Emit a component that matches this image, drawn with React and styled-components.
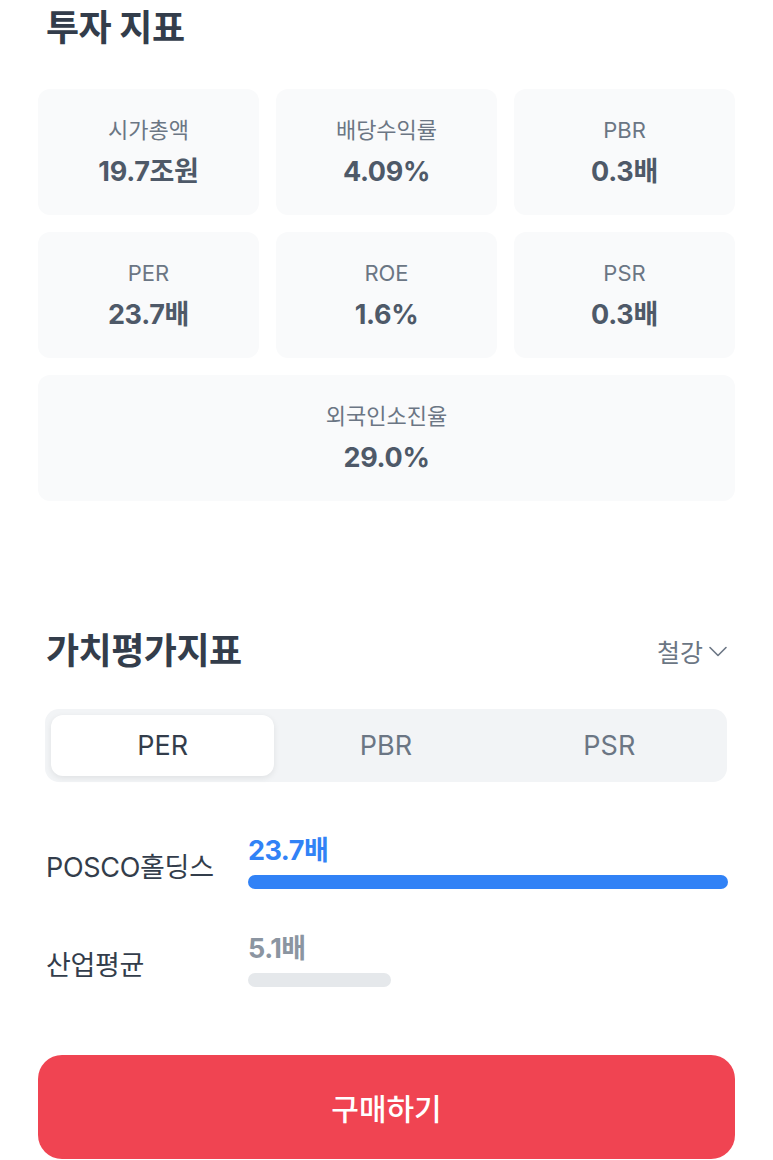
import styled, { createGlobalStyle } from "styled-components"

const GlobalStyle = createGlobalStyle`
  body {
    margin: 0;
    background: #fff;
    font-family: Inter, "Noto Sans CJK KR", sans-serif;
  }
`

const metrics = [
  { label: "시가총액", value: "19.7조원" },
  { label: "배당수익률", value: "4.09%" },
  { label: "PBR", value: "0.3배" },
  { label: "PER", value: "23.7배" },
  { label: "ROE", value: "1.6%" },
  { label: "PSR", value: "0.3배" },
  { label: "외국인소진율", value: "29.0%", wide: true },
]

const tabs = ["PER", "PBR", "PSR"]

const bars = [
  { name: "POSCO홀딩스", value: "23.7배", ratio: 1, main: true },
  { name: "산업평균", value: "5.1배", ratio: 143 / 480 },
]

const App = () => {
  return (
    <Page>
      <GlobalStyle />
      <Title>투자 지표</Title>
      <Grid>
        {metrics.map((m) => (
          <Card key={m.label} $wide={m.wide}>
            <Label>{m.label}</Label>
            <Value>{m.value}</Value>
          </Card>
        ))}
      </Grid>

      <Header>
        <Title>가치평가지표</Title>
        <Filter>
          철강
          <svg width="22" height="22" viewBox="0 0 22 22" fill="none">
            <path d="M3 7.5l8 8 8-8" stroke="#6b7684" strokeWidth="1.6" strokeLinecap="round" strokeLinejoin="round" />
          </svg>
        </Filter>
      </Header>

      <Segment>
        {tabs.map((t, i) => (
          <Tab key={t} $active={i === 0}>{t}</Tab>
        ))}
      </Segment>

      <Bars>
        {bars.map((b) => (
          <BarRow key={b.name}>
            <BarName>{b.name}</BarName>
            <BarBody>
              <BarValue $main={b.main}>{b.value}</BarValue>
              <Track>
                <Fill $main={b.main} style={{ width: `${b.ratio * 100}%` }} />
              </Track>
            </BarBody>
          </BarRow>
        ))}
      </Bars>

      <BuyButton>구매하기</BuyButton>
    </Page>
  )
}

export default App

const Page = styled.div`
  padding: 0 38px;
  height: 1160px;
  overflow: hidden;
  box-sizing: border-box;
`

const Title = styled.h2`
  margin: 0;
  padding-left: 8px;
  font-size: 36px;
  font-weight: 700;
  color: #333d4b;
  line-height: 56px;
  letter-spacing: -0.5px;
`

const Grid = styled.div`
  display: grid;
  grid-template-columns: repeat(3, 1fr);
  gap: 17px;
  margin-top: 33px;
`

const Card = styled.div`
  grid-column: ${({ $wide }) => ($wide ? "1 / -1" : "auto")};
  height: 126px;
  background: #f9fafb;
  border-radius: 12px;
  display: flex;
  flex-direction: column;
  align-items: center;
  justify-content: center;
  gap: 12px;
`

const Label = styled.span`
  font-size: 22px;
  color: #6b7684;
  line-height: 28px;
`

const Value = styled.span`
  font-size: 27px;
  font-weight: 700;
  color: #4e5968;
  line-height: 32px;
  letter-spacing: -0.3px;
`

const Header = styled.div`
  display: flex;
  align-items: center;
  justify-content: space-between;
  margin-top: 122px;
`

const Filter = styled.div`
  display: flex;
  align-items: center;
  gap: 4px;
  font-size: 25px;
  color: #6b7684;
  padding-right: 6px;
`

const Segment = styled.div`
  display: grid;
  grid-template-columns: repeat(3, 1fr);
  margin: 30px 8px 0 7px;
  padding: 6px;
  background: #f2f4f6;
  border-radius: 14px;
  height: 73px;
  box-sizing: border-box;
`

const Tab = styled.div`
  display: flex;
  align-items: center;
  justify-content: center;
  font-size: 27px;
  border-radius: 12px;
  color: ${({ $active }) => ($active ? "#333d4b" : "#6b7684")};
  background: ${({ $active }) => ($active ? "#fff" : "transparent")};
  box-shadow: ${({ $active }) => ($active ? "0 2px 6px rgba(0,0,0,0.08)" : "none")};
`

const Bars = styled.div`
  display: flex;
  flex-direction: column;
  gap: 44px;
  margin-top: 53px;
  padding: 0 7px 0 8px;
`

const BarRow = styled.div`
  display: flex;
  align-items: center;
`

const BarName = styled.span`
  width: 202px;
  flex-shrink: 0;
  font-size: 27px;
  color: #333d4b;
  padding-top: 6px;
  white-space: nowrap;
  letter-spacing: -0.3px;
`

const BarBody = styled.div`
  flex: 1;
  display: flex;
  flex-direction: column;
  gap: 8px;
`

const BarValue = styled.span`
  font-size: 27px;
  font-weight: 700;
  line-height: 32px;
  letter-spacing: -0.5px;
  color: ${({ $main }) => ($main ? "#3182f6" : "#8b95a1")};
`

const Track = styled.div`
  height: 14px;
`

const Fill = styled.div`
  height: 100%;
  border-radius: 7px;
  background: ${({ $main }) => ($main ? "#3182f6" : "#e5e8eb")};
`

const BuyButton = styled.button`
  display: block;
  width: 100%;
  height: 104px;
  margin-top: 68px;
  border: none;
  border-radius: 24px;
  background: #f04452;
  color: #fff;
  font-family: Inter, "Noto Sans CJK KR", sans-serif;
  font-size: 30px;
  font-weight: 500;
`
